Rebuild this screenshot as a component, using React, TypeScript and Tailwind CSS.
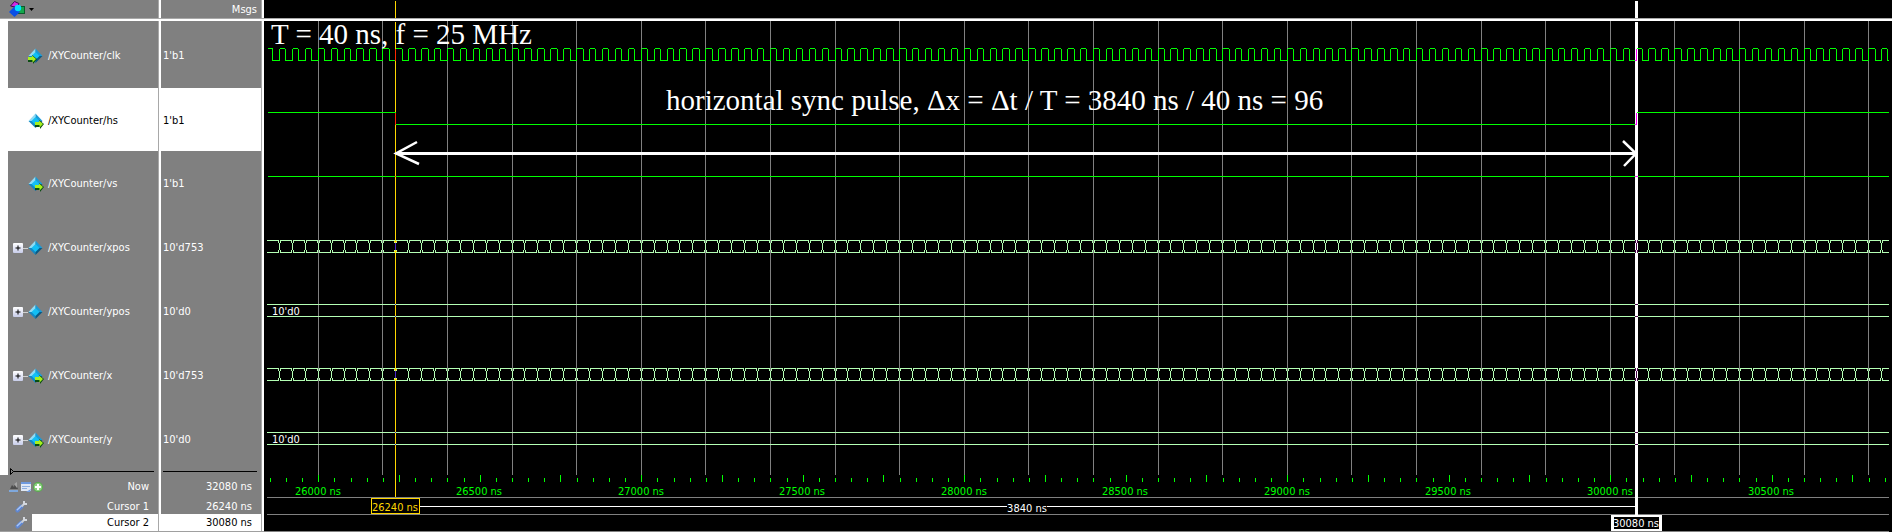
import React from "react";

type Direction = "in" | "out" | "none";

interface Signal {
  name: string;
  value: string;
  direction: Direction;
  expandable: boolean;
  selected?: boolean;
  rowClass: string;
}

const signals: Signal[] = [
  { name: "/XYCounter/clk", value: "1'b1", direction: "in", expandable: false, rowClass: "h-[67px]" },
  { name: "/XYCounter/hs", value: "1'b1", direction: "out", expandable: false, selected: true, rowClass: "h-[63px]" },
  { name: "/XYCounter/vs", value: "1'b1", direction: "out", expandable: false, rowClass: "h-16" },
  { name: "/XYCounter/xpos", value: "10'd753", direction: "none", expandable: true, rowClass: "h-16" },
  { name: "/XYCounter/ypos", value: "10'd0", direction: "none", expandable: true, rowClass: "h-16" },
  { name: "/XYCounter/x", value: "10'd753", direction: "out", expandable: true, rowClass: "h-16" },
  { name: "/XYCounter/y", value: "10'd0", direction: "out", expandable: true, rowClass: "h-16" },
];

const columnEdge = "shadow-[inset_-2px_0_0_#ffffff,inset_-3px_0_0_#a8a8a8]";
const uiFont = "'DejaVu Sans Condensed', 'DejaVu Sans', sans-serif";

/* ---------- icons ---------- */

function ObjectsIcon() {
  return (
    <svg width="16" height="16" viewBox="0 0 16 16" aria-hidden="true">
      <path d="M1.5 5L5.5.5l4.5 2-2 4z" fill="#d12be0" stroke="#3c0a52" />
      <rect x="9.5" y="5.5" width="6" height="7" fill="#14a84b" stroke="#0b5a2c" />
      <path d="M5.5 5.5L11 11l-5.5 5L0 11z" fill="#0a4fe6" />
      <circle cx="9" cy="7" r="3.2" fill="#00e5ff" />
    </svg>
  );
}

function SignalIcon({ direction }: { direction: Direction }) {
  return (
    <svg width="16" height="16" viewBox="0 0 16 16" className="shrink-0" aria-hidden="true">
      <path d="M7.5.5V8h-7z" fill="#8fdcf5" />
      <path d="M7.5.5l7 7.5h-7z" fill="#1a9ad6" />
      <path d="M.5 8h7v7z" fill="#1488c4" />
      <path d="M14.5 8l-7 7V8z" fill="#075a86" />
      <path d="M7.5 4l4 4-4 4-4-4z" fill="#12bff5" />
      {direction === "out" && (
        <>
          <path d="M7 9h4V7l5 4-4 5v-2H7z" fill="#0b4d12" />
          <path d="M7 9h4V7.5l4 3.5-3.5 3.5V12H7z" fill="#a6f01e" />
        </>
      )}
      {direction === "in" && (
        <>
          <path d="M0 9h4V7l5 4-4 5v-2H0z" fill="#0b4d12" />
          <path d="M0 9h4V7.5L8 11l-3.5 3.5V12H0z" fill="#a6f01e" />
        </>
      )}
    </svg>
  );
}

function WrenchIcon() {
  return (
    <svg width="13" height="13" viewBox="0 0 13 13" aria-hidden="true">
      <path d="M2.5 10.5l4-4" stroke="#5f86cf" strokeWidth="4" strokeLinecap="round" />
      <path d="M2.3 9.8L6 6.2" stroke="#a9c6f7" strokeWidth="1.5" strokeLinecap="round" />
      <path d="M6.5 6.5L9 4" stroke="#c9ced6" strokeWidth="2" />
      <path d="M9 1v3h3" stroke="#d4d8de" strokeWidth="2" fill="none" />
    </svg>
  );
}

function NowIcons() {
  return (
    <svg width="35" height="12" viewBox="0 0 35 12" aria-hidden="true">
      <path d="M1 8l2-4 2 2 1-4 3 6z" fill="#4d4d4d" />
      <path d="M5 3l3-2v6z" fill="#a5a5a5" />
      <path d="M0 10h9" stroke="#7fa8dc" strokeWidth="2" />
      <rect x="12" y="1" width="10" height="9" fill="#dfe8f5" />
      <rect x="12" y="1" width="10" height="2" fill="#6f9ade" />
      <path d="M13 5.5h8M13 7.5h5" stroke="#8fb0e0" />
      <path d="M17 11h4l1-3z" fill="#6f9ade" />
      <circle cx="29" cy="6" r="5" fill="#57ad4c" />
      <circle cx="29" cy="6" r="4" fill="#8dd082" />
      <path d="M29 3v6M26 6h6" stroke="#ffffff" strokeWidth="2" />
    </svg>
  );
}

/* ---------- left side: names and values ---------- */

function SignalTable() {
  return (
    <table className="w-[264px] shrink-0 table-fixed border-collapse bg-[#808080] text-[11px] leading-3 text-white [&_td]:p-0 [&_th]:p-0">
      <colgroup>
        <col className="w-2" />
        <col className="w-[153px]" />
        <col className="w-[103px]" />
      </colgroup>
      <thead>
        <tr className="h-[21px]">
          <th colSpan={2} scope="col" className={columnEdge}>
            <div className="flex h-[21px] items-start border-b-2 border-white pl-[9px] shadow-[inset_0_-1px_0_#a8a8a8]">
              <button type="button" aria-label="Object filter" className="flex items-center gap-1 pt-px">
                <ObjectsIcon />
                <svg width="5" height="3" viewBox="0 0 5 3" aria-hidden="true">
                  <path d="M0 0h5L2.5 3z" fill="#000000" />
                </svg>
              </button>
            </div>
          </th>
          <th scope="col" className={columnEdge}>
            <div className="flex h-[21px] items-center justify-end border-b-2 border-white pr-[7px] font-normal shadow-[inset_0_-1px_0_#a8a8a8]">
              Msgs
            </div>
          </th>
        </tr>
      </thead>
      <tbody>
        {signals.map((s) => (
          <tr key={s.name} className={`${s.rowClass} ${s.selected ? "bg-white text-black" : ""}`}>
            <td className="bg-white" />
            <td className={columnEdge}>
              <div className="flex items-center pt-0.5 pl-[5px]">
                {s.expandable ? (
                  <>
                    <button
                      type="button"
                      aria-label={`Expand ${s.name}`}
                      className="flex size-[10px] items-center justify-center rounded-[1px] bg-linear-to-b from-white to-[#c8cdea]"
                    >
                      <svg width="6" height="6" viewBox="0 0 6 6" aria-hidden="true">
                        <path d="M3 .5v5M.5 3h5" stroke="#000000" />
                      </svg>
                    </button>
                    <span className="h-px w-[5px] bg-[#d0d0d0]" />
                  </>
                ) : (
                  <span className="w-[15px]" />
                )}
                <SignalIcon direction={s.direction} />
                <span className="pl-1">{s.name}</span>
              </div>
            </td>
            <td className={columnEdge}>
              <div className="pt-0.5 pl-0.5">{s.value}</div>
            </td>
          </tr>
        ))}
        <tr className="h-1">
          <td className="bg-white" />
          <td className={columnEdge}>
            <div className="relative h-1 pl-1">
              <div className="mr-[7px] h-px bg-black" />
              <svg width="4" height="7" viewBox="0 0 4 7" className="absolute -top-[3px] left-[2px]" aria-hidden="true">
                <path d="M.5.5v6l3-3z" fill="#808080" stroke="#000000" />
              </svg>
            </div>
          </td>
          <td className={columnEdge}>
            <div className="h-1 pr-[7px] pl-0.5">
              <div className="h-px bg-black" />
            </div>
          </td>
        </tr>
      </tbody>
      <tfoot className="text-right">
        <tr className="h-[22px]">
          <td colSpan={2} className={columnEdge}>
            <div className="flex items-center justify-between pt-0.5 pr-3 pl-[9px]">
              <NowIcons />
              <span>Now</span>
            </div>
          </td>
          <td className={columnEdge}>
            <div className="pt-0.5 pr-3">32080 ns</div>
          </td>
        </tr>
        <tr className="h-[17px]">
          <td colSpan={2} className={columnEdge}>
            <div className="flex items-center justify-between pt-0.5 pr-3 pl-[15px]">
              <WrenchIcon />
              <span>Cursor 1</span>
            </div>
          </td>
          <td className={columnEdge}>
            <div className="pt-0.5 pr-3">26240 ns</div>
          </td>
        </tr>
        <tr className="h-[18px]">
          <td colSpan={2} className={columnEdge}>
            <div className="flex h-[18px] border-b border-[#a0a0a0]">
              <div className="flex w-8 items-center pl-[15px]">
                <WrenchIcon />
              </div>
              <div className="mr-[3px] flex flex-1 items-center justify-end bg-white pr-[9px] text-black">Cursor 2</div>
            </div>
          </td>
          <td className={`bg-white text-black ${columnEdge}`}>
            <div className="flex h-[18px] items-center justify-end border-b border-[#a0a0a0] pr-3">30080 ns</div>
          </td>
        </tr>
      </tfoot>
    </table>
  );
}

/* ---------- wave window ---------- */

const START = 25880;
const END = 30960;
const scale = (ns: number) => 54.2 + (ns - 26000) * 0.323;
const px = (ns: number) => Math.floor(scale(ns));

function range(from: number, to: number, step: number): number[] {
  const out: number[] = [];
  for (let v = from; v <= to; v += step) out.push(v);
  return out;
}

const CURSOR1 = px(26240);
const CURSOR2 = px(30080);

const clockPath =
  `M4 48.5H9M${px(25860)}.5 49V61M${px(25860)} 60.5H${px(START) + 1}` +
  range(START, END, 40)
    .map((t) => {
      const rise = px(t);
      const fall = px(t + 20);
      const next = px(t + 40);
      return `M${rise}.5 49V61M${rise + 1} 48.5H${fall}M${fall}.5 49V61M${fall} 60.5H${next + 1}`;
    })
    .join("");

function busPath(y: number): string {
  let left = 3;
  let d = "";
  for (const t of range(START, END, 40)) {
    const x = px(t);
    d += `M${left} ${y}.5H${x}M${left} ${y + 12}.5H${x}`;
    d += `M${x - 1}.5 ${y}V${y + 3}M${x + 1}.5 ${y}V${y + 3}`;
    d += `M${x}.5 ${y + 3}V${y + 10}`;
    d += `M${x - 1}.5 ${y + 10}V${y + 13}M${x + 1}.5 ${y + 10}V${y + 13}`;
    left = x + 1;
  }
  return d;
}

const gridPath = range(26000, END, 200)
  .map((t) => `M${px(t)}.5 21V475`)
  .join("");

const tickPath = range(25850, END, 50)
  .map((t) => `M${Math.round(scale(t))}.5 ${t % 250 === 0 ? 475 : 478}V482`)
  .join("");

function Waves() {
  return (
    <svg className="block h-[511px] w-full" role="img" aria-label="Signal waveforms">
      <g transform="translate(0 -21)">
        <g shapeRendering="crispEdges" fill="none">
          <path d={gridPath} stroke="#808080" />
          <path d={tickPath} stroke="#00ff00" />
          <path d="M3 497.5H4000M3 514.5H4000M0 531.5H4000" stroke="#808080" />

          <path d={`M${CURSOR1}.5 22V497`} stroke="#ffd700" />
          <path d={`M${CURSOR2}.5 22V515`} stroke="#ffffff" strokeWidth="3" />

          <path d={clockPath} stroke="#00ff00" />
          <path d={`M4 112.5H${CURSOR1 + 1}M${CURSOR1 + 1} 124.5H${CURSOR2}M${CURSOR2 + 1} 112.5H4000`} stroke="#00ff00" />
          <path d="M4 176.5H4000" stroke="#00ff00" />
          {[240, 368].map((y) => (
            <path key={y} d={busPath(y)} stroke="#b4ffb4" />
          ))}
          {[304, 432].map((y) => (
            <path key={y} d={`M3 ${y}.5H4000M3 ${y + 12}.5H4000`} stroke="#b4ffb4" />
          ))}

          <path d={`M${CURSOR1}.5 49V61M${CURSOR1}.5 113V125M${CURSOR1}.5 176V177`} stroke="#ff2800" />
          <path
            d={`M${CURSOR2}.5 49V61M${CURSOR2}.5 113V125M${CURSOR2 - 1} 60.5h1M${CURSOR2 - 1} 124.5h1M${CURSOR2 - 1} 176.5h3`}
            stroke="#ff00ff"
          />
          {[240, 368].map((y) => (
            <g key={y}>
              <path d={`M${CURSOR1}.5 ${y + 3}v7`} stroke="#4b28c8" />
              <path d={`M${CURSOR1 - 1} ${y + 1}.5h3M${CURSOR1 - 1} ${y + 11}.5h3`} stroke="#ffd700" />
              <path d={`M${CURSOR2 - 1}.5 ${y}v3m0 7v3m2-13v3m0 7v3M${CURSOR2}.5 ${y + 3}v7`} stroke="#4b004b" />
            </g>
          ))}
          {[304, 432].map((y) => (
            <g key={y}>
              <path d={`M${CURSOR1} ${y}.5h1m-1 12h1`} stroke="#4b28c8" />
              <path d={`M${CURSOR2 - 1} ${y}.5h3m-3 12h3`} stroke="#4b004b" />
            </g>
          ))}

          <path d={`M${CURSOR1 + 25} 506.5H${CURSOR2 - 1}`} stroke="#ffffff" />
          <rect x="743" y="500" width="40" height="13" fill="#000000" />
          <rect x={CURSOR1 - 24 + 0.5} y="498.5" width="48" height="15" fill="#000000" stroke="#ffd700" />
          <rect x={CURSOR2 - 25} y="515" width="51" height="16" fill="#ffffff" />
          <rect x={CURSOR2 - 22} y="517" width="45" height="12" fill="#000000" />
        </g>

        <g stroke="#ffffff" strokeWidth="3" fill="none">
          <path d={`M${CURSOR1 + 2} 153.5H${CURSOR2 - 1}`} />
          <path d="M153 142L132 153.5 155 164" strokeWidth="2.5" />
          <path d="M1359 141L1372 153.5 1360 166" strokeWidth="2.5" />
        </g>

        <g fill="#ffffff" fontFamily={uiFont} fontSize="11">
          <text x="8" y="315">10'd0</text>
          <text x="8" y="443">10'd0</text>
          <g textAnchor="middle">
            <g fill="#00ff00">
              {range(26000, END, 500).map((t) => (
                <text key={t} x={px(t)} y="495">
                  {t} ns
                </text>
              ))}
            </g>
            <text x={CURSOR1} y="511" fill="#ffd700">26240 ns</text>
            <text x="763" y="512">3840 ns</text>
            <text x={CURSOR2} y="527">30080 ns</text>
          </g>
        </g>
      </g>
    </svg>
  );
}

function WavePanel() {
  return (
    <section className="min-w-0 flex-1 overflow-hidden bg-black">
      <div className="h-[21px] border-b-2 border-white shadow-[inset_0_-1px_0_#a8a8a8]">
        <svg className="block h-[18px] w-full" aria-hidden="true">
          <g shapeRendering="crispEdges">
            <rect x={CURSOR1} y="1" width="1" height="17" fill="#ffd700" />
            <rect x={CURSOR2 - 1} y="1" width="3" height="17" fill="#ffffff" />
          </g>
        </svg>
      </div>
      <div className="relative pr-[3px] text-white">
        <Waves />
        <p className="absolute top-px left-[7px] font-['Liberation_Serif',serif] text-[29px] leading-6 whitespace-nowrap">
          T = 40 ns, f = 25 MHz
        </p>
        <p className="absolute top-[67px] left-[402px] font-['Liberation_Serif',serif] text-[29px] leading-6 whitespace-nowrap">
          horizontal sync pulse, Δx = Δt / T = 3840 ns / 40 ns = 96
        </p>
      </div>
    </section>
  );
}

export default function App() {
  return (
    <main className="flex items-start bg-black font-['DejaVu_Sans_Condensed','DejaVu_Sans',sans-serif]">
      <SignalTable />
      <WavePanel />
    </main>
  );
}
